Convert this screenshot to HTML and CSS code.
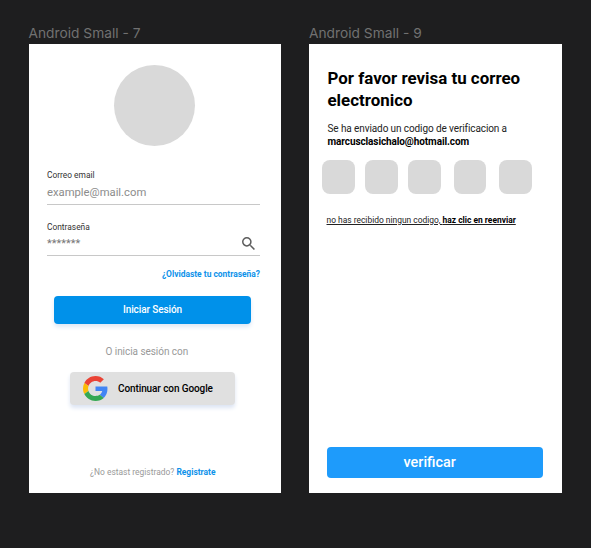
FILE: index.html
```html
<!DOCTYPE html>
<html lang="es">
<head>
<meta charset="utf-8">
<title>Android Small</title>
<link rel="stylesheet" href="styles.css">
</head>
<body>
<main class="board">
  <section class="frame">
    <h2 class="frame-name">Android Small - 7</h2>
    <div class="screen login">
      <div class="avatar"></div>
      <div class="label">Correo email</div>
      <div class="field"><span class="placeholder">example@mail.com</span></div>
      <div class="label second">Contraseña</div>
      <div class="field"><span class="dots">*******</span>
        <svg class="search" viewBox="3 3 17.5 17.5"><path fill="#5c5c5c" d="M15.5 14h-.79l-.28-.27A6.471 6.471 0 0 0 16 9.5 6.5 6.5 0 1 0 9.5 16c1.61 0 3.09-.59 4.23-1.57l.27.28v.79l5 4.99L20.49 19l-4.99-5zm-6 0C7.01 14 5 11.99 5 9.5S7.01 5 9.5 5 14 7.01 14 9.5 11.99 14 9.5 14z"/></svg>
      </div>
      <a class="forgot">¿Olvidaste tu contraseña?</a>
      <button class="signin">Iniciar Sesión</button>
      <div class="or">O inicia sesión con</div>
      <button class="google">
        <svg class="g-logo" viewBox="0 0 48 48"><path fill="#EA4335" d="M24 9.5c3.54 0 6.71 1.22 9.21 3.6l6.85-6.85C35.9 2.38 30.47 0 24 0 14.62 0 6.51 5.38 2.56 13.22l7.98 6.19C12.43 13.72 17.74 9.5 24 9.5z"/><path fill="#4285F4" d="M46.98 24.55c0-1.57-.15-3.09-.38-4.55H24v9.02h12.94c-.58 2.96-2.26 5.48-4.78 7.18l7.73 6c4.51-4.18 7.09-10.36 7.09-17.65z"/><path fill="#FBBC05" d="M10.53 28.59c-.48-1.45-.76-2.99-.76-4.59s.27-3.14.76-4.59l-7.98-6.19C.92 16.46 0 20.12 0 24s.92 7.54 2.56 10.78l7.97-6.19z"/><path fill="#34A853" d="M24 48c6.48 0 11.93-2.13 15.89-5.81l-7.73-6c-2.15 1.45-4.92 2.3-8.16 2.3-6.26 0-11.57-4.22-13.47-9.91l-7.98 6.19C6.51 42.62 14.62 48 24 48z"/></svg>
        <span>Continuar con Google</span>
      </button>
      <div class="register">¿No estast registrado? <b>Registrate</b></div>
    </div>
  </section>
  <section class="frame">
    <h2 class="frame-name">Android Small - 9</h2>
    <div class="screen verify">
      <h1>Por favor revisa tu correo electronico</h1>
      <p class="sent">Se ha enviado un codigo de verificacion a<br><b>marcusclasichalo@hotmail.com</b></p>
      <div class="code"><i></i><i></i><i></i><i></i><i></i></div>
      <div class="resend">no has recibido ningun codigo, <b>haz clic en reenviar</b></div>
      <button class="check">verificar</button>
    </div>
  </section>
</main>
</body>
</html>
```
FILE: styles.css
```css
* { box-sizing: border-box; }
body { margin: 0; background: #1e1e1f; font-family: Roboto, "Liberation Sans", sans-serif; color: #000; }
button { border: 0; font-family: inherit; padding: 0; }
.board { display: flex; gap: 28px; height: 548px; padding: 25px 0 0 28.5px; }
.frame { width: 252.5px; }
.frame-name { margin: 0; height: 19.3px; font: 400 13.75px/17px Inter, sans-serif; color: #717171; white-space: nowrap; }
.screen { height: 449px; background: #fff; display: flex; flex-direction: column; white-space: nowrap; }

.login { padding: 20.7px 21px 0 18.5px; }
.avatar { width: 81.5px; height: 81.5px; margin-left: 66.8px; border-radius: 50%; background: #d9d9d9; flex: none; }
.label { margin-top: 22.8px; font-size: 8.4px; line-height: 12px; color: #333; }
.label.second { margin-top: 16px; }
.field { display: flex; align-items: center; height: 23.5px; border-bottom: 1.5px solid #c8c8c8; }
.placeholder { font-size: 11.25px; line-height: 16px; margin-top: 1px; color: #8c8c8c; }
.dots { font-size: 11px; line-height: 16px; color: #777; }
.search { width: 13px; height: 13px; margin: -1px 5px 0 auto; }
.forgot { margin-top: 11.5px; font-size: 8.45px; line-height: 12px; font-weight: 700; color: #0d92ea; text-align: right; }
.signin { width: 197px; height: 28px; margin: 16.2px 0 0 7px; border-radius: 4px; background: #0091ea; box-shadow: 0 3px 4px #dfe8f5; color: #fff; font-size: 10px; letter-spacing: -.1px; font-weight: 500; line-height: 28px; }
.or { margin-top: 21.5px; padding-left: 58.5px; font-size: 10px; letter-spacing: -.05px; line-height: 14px; color: #999; }
.google { display: flex; align-items: center; gap: 10px; width: 165px; height: 33.5px; margin: 12.5px 0 0 23px; padding-left: 13px; border-radius: 4px; background: #e0e0e0; box-shadow: 0 3px 4px #dce4f3; font-size: 10px; letter-spacing: -.1px; font-weight: 500; color: #000; }
.g-logo { width: 25px; height: 25px; }
.register { margin-top: 59.3px; padding-left: 43px; font-size: 8.45px; line-height: 14px; color: #999; }
.register b { color: #0d92ea; }

.verify { padding: 23.2px 18.5px 0; }
h1 { margin: 0; font-size: 16.9px; font-weight: 700; line-height: 22px; white-space: normal; }
.sent { margin: 10.9px 0 0; font-size: 10px; letter-spacing: -.1px; line-height: 13px; color: #222; }
.sent b { color: #000; }
.code { display: grid; grid-template-columns: 43px 43px 45.5px 45.5px 33px; height: 34.5px; margin: 11.5px 0 0 -5.3px; }
.code i { width: 32.5px; border-radius: 8px; background: #d9d9d9; }
.resend { margin: 18.3px 0 0 -1px; font-size: 8.43px; line-height: 14px; text-decoration: underline; color: #222; }
.resend b { color: #000; }
.check { width: 216px; height: 31px; margin: 220px 0 0 -.3px; padding-right: 11px; border-radius: 4px; background: #1e9bfb; color: #fff; font-size: 14.4px; font-weight: 500; line-height: 31px; }
```
